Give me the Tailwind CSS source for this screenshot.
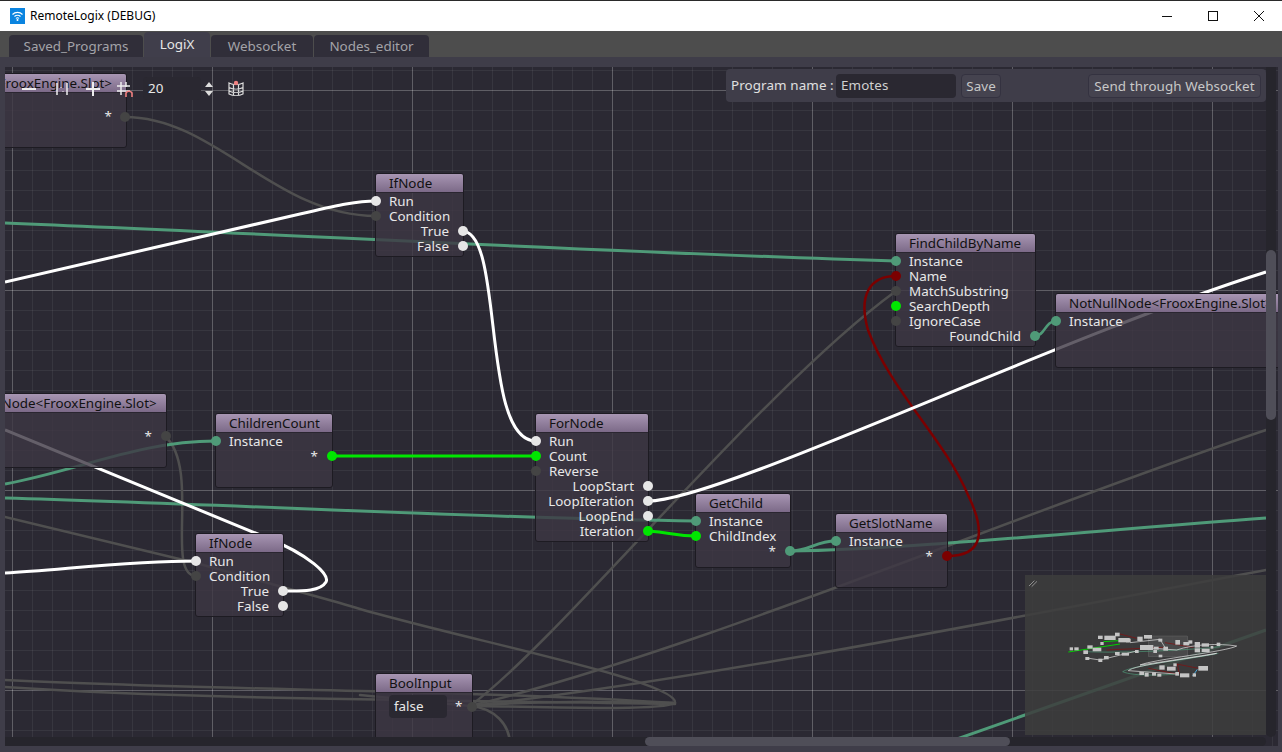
<!DOCTYPE html>
<html lang="en">
<head>
<meta charset="UTF-8" />
<title>RemoteLogix (DEBUG)</title>
<script src="https://cdn.jsdelivr.net/npm/@tailwindcss/browser@4"></script>
</head>
<body class="bg-[#3f3d49] font-['Noto_Sans',sans-serif] overflow-hidden">
<div class="w-[1282px] h-[752px] flex flex-col">

  <!-- title bar -->
  <div class="h-[31px] bg-white border-t border-[#2a2a2a] flex items-center pl-[10px] shrink-0">
    <svg width="15" height="16" viewBox="0 0 15 16" class="mr-[5px]">
      <rect width="15" height="16" fill="#0a84e0"/>
      <path d="M2.5 6.5a7 7 0 0 1 10 0M4.5 8.5a4.2 4.2 0 0 1 6 0M6 10.5a2 2 0 0 1 3 0" stroke="#fff" stroke-width="1.1" fill="none"/>
      <circle cx="7.5" cy="12" r="1" fill="#fff"/>
    </svg>
    <span class="text-[12px] text-black">RemoteLogix (DEBUG)</span>
    <div class="ml-auto flex items-center">
      <svg width="120" height="16" viewBox="0 0 120 16" fill="none" stroke="#111">
        <path d="M0 8.5h10"/>
        <rect x="46.5" y="3.5" width="9" height="9"/>
        <path d="M92 3l10 10M102 3l-10 10"/>
      </svg>
    </div>
  </div>

  <!-- tabs -->
  <div class="h-[26px] bg-[#4d4d4d] flex items-end pl-[9px] gap-px shrink-0 text-[13.4px]">
    <div class="w-[134px] h-[22px] bg-[#302e39] text-[#a3a3a8] flex items-center justify-center rounded-t-sm">Saved_Programs</div>
    <div class="w-[66px] h-[25px] bg-[#403e4b] text-[#e6e6e6] flex items-center justify-center rounded-t-sm">LogiX</div>
    <div class="w-[102px] h-[22px] bg-[#302e39] text-[#a3a3a8] flex items-center justify-center rounded-t-sm">Websocket</div>
    <div class="w-[115px] h-[22px] bg-[#302e39] text-[#a3a3a8] flex items-center justify-center rounded-t-sm">Nodes_editor</div>
  </div>

  <!-- panel holding the graph -->
  <div class="flex-1 bg-[#3f3d49] pt-[10px] pl-[5px] pr-[4px] pb-[6px] min-h-0">
    <div class="relative w-full h-full overflow-hidden bg-[#2b2933] text-[13.4px] leading-[15px] text-[#e8e8e8]">

      <!-- grid and wires -->
      <svg class="absolute left-0 top-0" width="1273" height="679" viewBox="5 67 1273 679" fill="none">
        <defs>
          <pattern id="minor" x="12" y="10" width="20" height="20" patternUnits="userSpaceOnUse">
            <path d="M0.5 0V20M0 0.5H20" stroke="#ffffff" stroke-opacity="0.06"/>
          </pattern>
          <pattern id="major" x="12" y="90" width="200" height="200" patternUnits="userSpaceOnUse">
            <path d="M0.5 0V200M0 0.5H200" stroke="#ffffff" stroke-opacity="0.2"/>
          </pattern>
        </defs>
        <rect x="5" y="67" width="1273" height="679" fill="url(#minor)"/>
        <rect x="5" y="67" width="1273" height="679" fill="url(#major)"/>

        <!-- gray bool wires -->
        <g stroke="#4f4f4f" stroke-width="2.5" stroke-linecap="round">
          <path d="M125 117C215 117 275 216 376 216"/>
          <path d="M166 437C200 470 165 575 196 576"/>
          <path d="M5 517L196 563L340 603C440 635 680 680 675 703C660 712 520 706 470 706"/>
          <path d="M470 706C560 640 760 390 896 291"/>
          <path d="M470 706C700 650 1000 520 1266 430"/>
          <path d="M470 706C700 680 1000 620 1266 570"/>
          <path d="M5 680C200 690 470 690 675 703"/>
          <path d="M5 687C200 700 470 700 675 704"/>
          <path d="M470 706C495 708 510 725 510 745"/>
          <path d="M470 706L360 695"/>
          <path d="M470 706C540 700 620 702 672 703"/>
        </g>

        <!-- slot wires -->
        <g stroke="#4f9a78" stroke-width="3">
          <path d="M5 223C300 235 600 252 896 261"/>
          <path d="M5 484C80 470 140 441 216 441"/>
          <path d="M5 498C250 505 500 519 696 521"/>
          <path d="M790 551C810 551 815 541 836 541"/>
          <path d="M790 551C900 550 1100 530 1266 518"/>
          <path d="M1035 336C1045 336 1045 321 1056 321" stroke-width="2.5"/>
          <path d="M940 745L1266 630"/>
        </g>

        <!-- int wires -->
        <g stroke="#00e600" stroke-width="3">
          <path d="M332 456H536"/>
          <path d="M648 531C670 532 675 536 696 536"/>
        </g>

        <!-- string wire -->
        <path d="M947 556C985 556 985 530 968 495C945 440 890 390 868 330C858 295 870 276 896 276" stroke="#7b0000" stroke-width="2.5"/>

        <!-- impulse wires -->
        <g stroke="#ffffff" stroke-width="3">
          <path d="M5 282L300 214C335 206 355 201 376 201"/>
          <path d="M462 231C505 231 480 441 536 441"/>
          <path d="M648 501C720 501 1050 340 1266 272"/>
          <path d="M5 430L265 537C310 555 330 575 326 582C320 592 300 591 283 591"/>
          <path d="M5 573C60 570 130 561 196 561"/>
        </g>
      </svg>

      <!-- top-left partial node -->
      <div class="absolute left-[-100px] top-[6px] w-[222px] h-[75px] border border-[#1d1b22] rounded-[3px] bg-[#3d3743]/80 overflow-hidden">
        <div class="h-[19px] border-b border-[#2a2630] bg-gradient-to-b from-[#a896b3] to-[#7c6a88] text-[#111] text-right pr-[14px] whitespace-nowrap leading-[18px]">NotNullNode&lt;FrooxEngine.Slot&gt;</div>
        <div class="h-[15px] mt-[16px] text-right pr-[14px]">*</div>
      </div>
      <div class="absolute left-[115px] top-[45px] w-[10px] h-[10px] rounded-full bg-[#444]"></div>

      <!-- IfNode top -->
      <div class="absolute left-[370px] top-[106px] w-[89px] h-[84px] border border-[#1d1b22] rounded-[3px] bg-[#3d3743]/80">
        <div class="h-[19px] border-b border-[#2a2630] bg-gradient-to-b from-[#a896b3] to-[#7c6a88] text-[#111] pl-[13px] leading-[18px] rounded-t-[2px]">IfNode</div>
        <div class="pt-px">
          <div class="relative h-[15px] pl-[13px]">Run<i class="absolute -left-[5px] top-[2px] w-[10px] h-[10px] rounded-full bg-[#e6e6e6]"></i></div>
          <div class="relative h-[15px] pl-[13px]">Condition<i class="absolute -left-[5px] top-[2px] w-[10px] h-[10px] rounded-full bg-[#444]"></i></div>
          <div class="relative h-[15px] pr-[14px] text-right">True<i class="absolute -right-[5px] top-[2px] w-[10px] h-[10px] rounded-full bg-[#e6e6e6]"></i></div>
          <div class="relative h-[15px] pr-[14px] text-right">False<i class="absolute -right-[5px] top-[2px] w-[10px] h-[10px] rounded-full bg-[#e6e6e6]"></i></div>
        </div>
      </div>

      <!-- FindChildByName -->
      <div class="absolute left-[890px] top-[166px] w-[141px] h-[114px] border border-[#1d1b22] rounded-[3px] bg-[#3d3743]/80">
        <div class="h-[19px] border-b border-[#2a2630] bg-gradient-to-b from-[#a896b3] to-[#7c6a88] text-[#111] pl-[13px] leading-[18px] rounded-t-[2px]">FindChildByName</div>
        <div class="pt-px">
          <div class="relative h-[15px] pl-[13px]">Instance<i class="absolute -left-[5px] top-[2px] w-[10px] h-[10px] rounded-full bg-[#4f9a78]"></i></div>
          <div class="relative h-[15px] pl-[13px]">Name<i class="absolute -left-[5px] top-[2px] w-[10px] h-[10px] rounded-full bg-[#7b0000]"></i></div>
          <div class="relative h-[15px] pl-[13px]">MatchSubstring<i class="absolute -left-[5px] top-[2px] w-[10px] h-[10px] rounded-full bg-[#444]"></i></div>
          <div class="relative h-[15px] pl-[13px]">SearchDepth<i class="absolute -left-[5px] top-[2px] w-[10px] h-[10px] rounded-full bg-[#00e600]"></i></div>
          <div class="relative h-[15px] pl-[13px]">IgnoreCase<i class="absolute -left-[5px] top-[2px] w-[10px] h-[10px] rounded-full bg-[#444]"></i></div>
          <div class="relative h-[15px] pr-[14px] text-right">FoundChild<i class="absolute -right-[5px] top-[2px] w-[10px] h-[10px] rounded-full bg-[#4f9a78]"></i></div>
        </div>
      </div>

      <!-- NotNullNode right -->
      <div class="absolute left-[1050px] top-[226px] w-[300px] h-[75px] border border-[#1d1b22] rounded-[3px] bg-[#3d3743]/80">
        <div class="h-[19px] border-b border-[#2a2630] bg-gradient-to-b from-[#a896b3] to-[#7c6a88] text-[#111] pl-[13px] leading-[18px] rounded-t-[2px] whitespace-nowrap">NotNullNode&lt;FrooxEngine.Slot&gt;</div>
        <div class="pt-px">
          <div class="relative h-[15px] pl-[13px]">Instance<i class="absolute -left-[5px] top-[2px] w-[10px] h-[10px] rounded-full bg-[#4f9a78]"></i></div>
        </div>
      </div>

      <!-- NotNullNode left -->
      <div class="absolute left-[-53px] top-[326px] w-[215px] h-[75px] border border-[#1d1b22] rounded-[3px] bg-[#3d3743]/80">
        <div class="h-[19px] border-b border-[#2a2630] bg-gradient-to-b from-[#a896b3] to-[#7c6a88] text-[#111] text-right pr-[14px] leading-[18px] rounded-t-[2px] whitespace-nowrap overflow-hidden">NotNullNode&lt;FrooxEngine.Slot&gt;</div>
        <div class="relative h-[15px] mt-[16px] pr-[14px] text-right">*<i class="absolute -right-[5px] top-[2px] w-[10px] h-[10px] rounded-full bg-[#444]"></i></div>
      </div>

      <!-- ChildrenCount -->
      <div class="absolute left-[210px] top-[346px] w-[118px] h-[75px] border border-[#1d1b22] rounded-[3px] bg-[#3d3743]/80">
        <div class="h-[19px] border-b border-[#2a2630] bg-gradient-to-b from-[#a896b3] to-[#7c6a88] text-[#111] pl-[13px] leading-[18px] rounded-t-[2px]">ChildrenCount</div>
        <div class="pt-px">
          <div class="relative h-[15px] pl-[13px]">Instance<i class="absolute -left-[5px] top-[2px] w-[10px] h-[10px] rounded-full bg-[#4f9a78]"></i></div>
          <div class="relative h-[15px] pr-[14px] text-right">*<i class="absolute -right-[5px] top-[2px] w-[10px] h-[10px] rounded-full bg-[#00e600]"></i></div>
        </div>
      </div>

      <!-- ForNode -->
      <div class="absolute left-[530px] top-[346px] w-[114px] h-[129px] border border-[#1d1b22] rounded-[3px] bg-[#3d3743]/80">
        <div class="h-[19px] border-b border-[#2a2630] bg-gradient-to-b from-[#a896b3] to-[#7c6a88] text-[#111] pl-[13px] leading-[18px] rounded-t-[2px]">ForNode</div>
        <div class="pt-px">
          <div class="relative h-[15px] pl-[13px]">Run<i class="absolute -left-[5px] top-[2px] w-[10px] h-[10px] rounded-full bg-[#e6e6e6]"></i></div>
          <div class="relative h-[15px] pl-[13px]">Count<i class="absolute -left-[5px] top-[2px] w-[10px] h-[10px] rounded-full bg-[#00e600]"></i></div>
          <div class="relative h-[15px] pl-[13px]">Reverse<i class="absolute -left-[5px] top-[2px] w-[10px] h-[10px] rounded-full bg-[#444]"></i></div>
          <div class="relative h-[15px] pr-[14px] text-right">LoopStart<i class="absolute -right-[5px] top-[2px] w-[10px] h-[10px] rounded-full bg-[#e6e6e6]"></i></div>
          <div class="relative h-[15px] pr-[14px] text-right">LoopIteration<i class="absolute -right-[5px] top-[2px] w-[10px] h-[10px] rounded-full bg-[#e6e6e6]"></i></div>
          <div class="relative h-[15px] pr-[14px] text-right">LoopEnd<i class="absolute -right-[5px] top-[2px] w-[10px] h-[10px] rounded-full bg-[#e6e6e6]"></i></div>
          <div class="relative h-[15px] pr-[14px] text-right">Iteration<i class="absolute -right-[5px] top-[2px] w-[10px] h-[10px] rounded-full bg-[#00e600]"></i></div>
        </div>
      </div>

      <!-- GetChild -->
      <div class="absolute left-[690px] top-[426px] w-[96px] h-[75px] border border-[#1d1b22] rounded-[3px] bg-[#3d3743]/80">
        <div class="h-[19px] border-b border-[#2a2630] bg-gradient-to-b from-[#a896b3] to-[#7c6a88] text-[#111] pl-[13px] leading-[18px] rounded-t-[2px]">GetChild</div>
        <div class="pt-px">
          <div class="relative h-[15px] pl-[13px]">Instance<i class="absolute -left-[5px] top-[2px] w-[10px] h-[10px] rounded-full bg-[#4f9a78]"></i></div>
          <div class="relative h-[15px] pl-[13px]">ChildIndex<i class="absolute -left-[5px] top-[2px] w-[10px] h-[10px] rounded-full bg-[#00e600]"></i></div>
          <div class="relative h-[15px] pr-[14px] text-right">*<i class="absolute -right-[5px] top-[2px] w-[10px] h-[10px] rounded-full bg-[#4f9a78]"></i></div>
        </div>
      </div>

      <!-- GetSlotName -->
      <div class="absolute left-[830px] top-[446px] w-[113px] h-[75px] border border-[#1d1b22] rounded-[3px] bg-[#3d3743]/80">
        <div class="h-[19px] border-b border-[#2a2630] bg-gradient-to-b from-[#a896b3] to-[#7c6a88] text-[#111] pl-[13px] leading-[18px] rounded-t-[2px]">GetSlotName</div>
        <div class="pt-px">
          <div class="relative h-[15px] pl-[13px]">Instance<i class="absolute -left-[5px] top-[2px] w-[10px] h-[10px] rounded-full bg-[#4f9a78]"></i></div>
          <div class="relative h-[15px] pr-[14px] text-right">*<i class="absolute -right-[5px] top-[2px] w-[10px] h-[10px] rounded-full bg-[#7b0000]"></i></div>
        </div>
      </div>

      <!-- IfNode bottom -->
      <div class="absolute left-[190px] top-[466px] w-[89px] h-[84px] border border-[#1d1b22] rounded-[3px] bg-[#3d3743]/80">
        <div class="h-[19px] border-b border-[#2a2630] bg-gradient-to-b from-[#a896b3] to-[#7c6a88] text-[#111] pl-[13px] leading-[18px] rounded-t-[2px]">IfNode</div>
        <div class="pt-px">
          <div class="relative h-[15px] pl-[13px]">Run<i class="absolute -left-[5px] top-[2px] w-[10px] h-[10px] rounded-full bg-[#e6e6e6]"></i></div>
          <div class="relative h-[15px] pl-[13px]">Condition<i class="absolute -left-[5px] top-[2px] w-[10px] h-[10px] rounded-full bg-[#444]"></i></div>
          <div class="relative h-[15px] pr-[14px] text-right">True<i class="absolute -right-[5px] top-[2px] w-[10px] h-[10px] rounded-full bg-[#e6e6e6]"></i></div>
          <div class="relative h-[15px] pr-[14px] text-right">False<i class="absolute -right-[5px] top-[2px] w-[10px] h-[10px] rounded-full bg-[#e6e6e6]"></i></div>
        </div>
      </div>

      <!-- BoolInput -->
      <div class="absolute left-[370px] top-[606px] w-[98px] h-[100px] border border-[#1d1b22] rounded-[3px] bg-[#3d3743]/80">
        <div class="h-[19px] border-b border-[#2a2630] bg-gradient-to-b from-[#a896b3] to-[#7c6a88] text-[#111] pl-[13px] leading-[18px] rounded-t-[2px]">BoolInput</div>
        <div class="relative mt-[2px] pl-[13px] flex items-center">
          <div class="w-[58px] h-[23px] bg-[#2a2831] rounded-sm pl-[5px] leading-[22px]">false</div>
          <span class="ml-[8px]">*</span>
          <i class="absolute -right-[5px] top-[7px] w-[10px] h-[10px] rounded-full bg-[#444]"></i>
        </div>
      </div>

      <!-- graph toolbar -->
      <div class="absolute left-[17px] top-[10px] flex items-center h-[23px]">
        <svg width="120" height="23" viewBox="0 0 120 23" fill="none" stroke="#eee" stroke-width="2">
          <path d="M0 12H14"/>
          <path d="M35 6V18M45 6V18" stroke-width="1.5"/><path d="M39 10v1M41 14v1" stroke-width="1"/>
          <path d="M64 12H78M71 5V19"/>
          <path d="M95 9H108M95 14H108M99 5V18M104 5V10" stroke-width="1.5"/>
          <path d="M104 20V16a3.5 3.5 0 0 1 6 0V20" stroke="#f08080" stroke-width="1.6"/>
        </svg>
        <div class="w-[58px] h-[23px] bg-[#2a2831] ml-px pl-[5px] leading-[23px] rounded-sm">20</div>
        <svg width="12" height="16" viewBox="0 0 12 16" class="ml-[2px]" fill="#ddd"><path d="M6 1l4 5H2zM6 15l4-5H2z"/></svg>
        <svg width="16" height="18" viewBox="0 0 16 18" class="ml-[13px]" fill="none" stroke="#ddd" stroke-width="1.2">
          <path d="M1 3C5 5 11 5 15 3V14C11 16 5 16 1 14ZM1 7.5C5 9.5 11 9.5 15 7.5M1 11C5 13 11 13 15 11M5.5 4.5V15M10.5 4.5V15"/>
          <circle cx="8" cy="3" r="2.2" fill="#f08080" stroke="none"/>
        </svg>
      </div>

      <!-- program panel -->
      <div class="absolute left-[721px] top-[2px] w-[540px] h-[33px] bg-[#3f3d49] rounded-sm flex items-center pl-[5px] pr-[5px] tracking-[0.1px] text-[#e0e0e0]">
        <span class="w-[105px] whitespace-nowrap">Program name :</span>
        <div class="w-[120px] h-[24px] bg-[#2a2831] text-[#d0d0d0] pl-[5px] leading-[23px] rounded-sm">Emotes</div>
        <div class="w-[40px] h-[24px] ml-[5px] bg-[#45434f] border border-[#343240] rounded-sm text-center leading-[22px] text-[#c8c8c8]">Save</div>
        <div class="ml-auto w-[173px] h-[24px] bg-[#45434f] border border-[#343240] rounded-sm text-center leading-[22px] text-[#c8c8c8]">Send through Websocket</div>
      </div>

      <!-- minimap -->
      <svg class="absolute left-[1020px] top-[508px]" width="241" height="160" viewBox="15 15 723 480" fill="none">
        <rect x="15" y="15" width="723" height="480" fill="#3d3d3d" fill-opacity="0.85"/>
        <path d="M27 48L43 32M35 50L51 34" stroke="#bbb" stroke-width="2"/>
        <rect x="385" y="198" width="118" height="62" fill="#fff" fill-opacity="0.08" stroke="#777"/>
        <g stroke="#4f9a78" stroke-width="2">
          <path d="M200 245C300 250 520 240 600 230"/>
          <path d="M595 250C500 270 340 285 308 305C340 320 440 315 470 312"/>
        </g>
        <g stroke="#8a0c0c" stroke-width="2">
          <path d="M300 192L350 205M260 240L430 232M470 282L535 295M472 282L478 312M385 295L470 312M435 218L520 232"/>
        </g>
        <g stroke="#00d000" stroke-width="3">
          <path d="M145 246L300 222M250 215L295 212"/>
        </g>
        <g stroke="#e8e8e8" stroke-width="2">
          <path d="M360 232L470 240C520 222 600 220 650 228C620 245 400 268 360 285C400 280 590 250 590 250C520 265 340 285 325 302L470 312M200 264L240 270L350 243M330 218L420 208L440 240"/>
        </g>
        <path d="M518 318L532 298" stroke="#4aa8d8" stroke-width="3"/>
        <g fill="#c4c4c4">
          <rect x="149" y="232" width="10" height="9"/><rect x="163" y="232" width="13" height="9"/><rect x="190" y="241" width="14" height="11"/>
          <rect x="202" y="226" width="16" height="10"/><rect x="218" y="233" width="26" height="11"/><rect x="234" y="197" width="14" height="10"/>
          <rect x="253" y="197" width="34" height="13"/><rect x="285" y="188" width="14" height="11"/><rect x="241" y="216" width="10" height="9"/>
          <rect x="295" y="204" width="34" height="13"/><rect x="318" y="206" width="14" height="11"/><rect x="352" y="200" width="16" height="13"/>
          <rect x="372" y="195" width="24" height="11"/><rect x="415" y="206" width="12" height="9"/><rect x="360" y="225" width="40" height="15"/>
          <rect x="402" y="230" width="14" height="9"/><rect x="430" y="230" width="14" height="12"/><rect x="466" y="210" width="14" height="14"/>
          <rect x="490" y="216" width="18" height="10"/><rect x="505" y="211" width="12" height="10"/><rect x="524" y="216" width="16" height="17"/>
          <rect x="545" y="220" width="22" height="10"/><rect x="590" y="218" width="11" height="10"/><rect x="524" y="235" width="16" height="12"/>
          <rect x="545" y="236" width="24" height="10"/><rect x="572" y="228" width="8" height="8"/><rect x="285" y="246" width="14" height="9"/>
          <rect x="305" y="248" width="22" height="9"/><rect x="345" y="240" width="11" height="9"/><rect x="400" y="240" width="11" height="9"/>
          <rect x="416" y="254" width="11" height="8"/><rect x="196" y="261" width="12" height="9"/><rect x="235" y="266" width="12" height="10"/>
          <rect x="252" y="258" width="14" height="10"/><rect x="418" y="286" width="16" height="13"/><rect x="441" y="290" width="26" height="12"/>
          <rect x="460" y="280" width="10" height="9"/><rect x="535" y="288" width="29" height="14"/><rect x="358" y="306" width="14" height="9"/>
          <rect x="374" y="308" width="12" height="12"/><rect x="396" y="307" width="12" height="10"/><rect x="412" y="311" width="12" height="9"/>
          <rect x="466" y="306" width="11" height="11"/><rect x="480" y="310" width="28" height="12"/><rect x="518" y="310" width="10" height="10"/>
        </g>
      </svg>

      <!-- scrollbars -->
      <div class="absolute left-[1261px] top-0 w-[10px] h-[670px] bg-[#26252c] rounded-b-md">
        <div class="absolute left-0 top-[183px] w-[10px] h-[170px] bg-[#4f4e58] rounded-md"></div>
      </div>
      <div class="absolute left-0 top-[670px] w-[1261px] h-[9px] bg-[#26252c] rounded-r-md">
        <div class="absolute left-[640px] top-0 w-[365px] h-[9px] bg-[#4f4e58] rounded-md"></div>
      </div>
    </div>
  </div>
</div>
</body>
</html>
